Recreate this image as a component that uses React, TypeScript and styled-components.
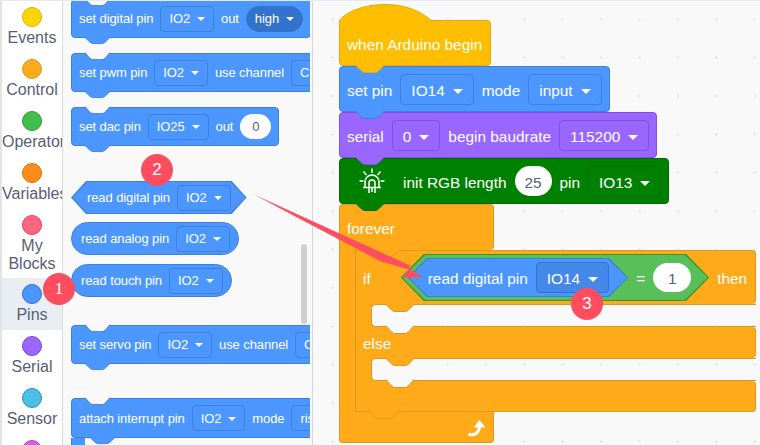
import React from 'react'
import styled, { createGlobalStyle, css } from 'styled-components'

const colors = {
  blue: '#4c97ff',
  blueLine: '#3f80da',
  blueDark: '#3373cc',
  blueField: '#4489ea',
  orange: '#ffab19',
  orangeLine: '#d9982a',
  yellow: '#ffbf00',
  yellowLine: '#e0ac12',
  purple: '#9966ff',
  purpleLine: '#7e52d6',
  green: '#008000',
  greenLine: '#006b00',
  lime: '#59c059',
  limeLine: '#389438',
  paper: '#f9f9f9',
  ink: '#575e75',
  badge: '#ff4d60',
}

const categories = [
  { name: 'Events', color: '#ffd500', line: '#d6b300' },
  { name: 'Control', color: '#ffab19', line: '#d9982a' },
  { name: 'Operators', color: '#40bf4a', line: '#389438' },
  { name: 'Variables', color: '#ff8c1a', line: '#db6e00' },
  { name: 'My Blocks', color: '#ff6680', line: '#ff3355' },
  { name: 'Pins', color: '#4c97ff', line: '#3373cc', active: true },
  { name: 'Serial', color: '#9966ff', line: '#774dcb' },
  { name: 'Sensor', color: '#4cbfe6', line: '#2e8eb8' },
  { name: 'Actuator', color: '#cf63cf', line: '#bd42bd' },
]

const GlobalStyle = createGlobalStyle`
  html, body { margin: 0; padding: 0; background: #fff; }
  body { font-family: "Liberation Sans", Arial, sans-serif; }
`

const dots = css`
  background-color: ${colors.paper};
  background-image: radial-gradient(circle at center, #e6e6e6 0, #e6e6e6 1px, transparent 1.4px);
  background-size: 38.4px 38.4px;
  background-position: 6px 0;
  background-attachment: fixed;
`

const Page = styled.div`
  position: relative;
  display: flex;
  width: 760px;
  height: 445px;
  overflow: hidden;
  box-sizing: border-box;
  border-top: 1px solid #e3eaf3;
  background: #fff;
`

const Sidebar = styled.nav`
  flex: none;
  width: 61px;
  margin-left: 2px;
  box-shadow: -2px 0 0 #e4e4e4;
  border-right: 1px solid #dcdcdc;
  overflow: hidden;
  box-sizing: border-box;
`

const CategoryItem = styled.div<{ $active?: boolean }>`
  display: flex;
  flex-direction: column;
  align-items: center;
  box-sizing: border-box;
  min-height: 52px;
  padding: 6px 0 5px;
  background: ${(p) => (p.$active ? '#e9eef2' : 'transparent')};
`

const CategoryDot = styled.span<{ $color: string; $line: string }>`
  flex: none;
  box-sizing: border-box;
  width: 20px;
  height: 20px;
  border-radius: 50%;
  background: ${(p) => p.$color};
  border: 1px solid ${(p) => p.$line};
`

const CategoryName = styled.span`
  display: block;
  width: 60px;
  margin-top: 2px;
  text-align: center;
  font-size: 16px;
  line-height: 18px;
  color: ${colors.ink};
  white-space: pre;
`

const Palette = styled.section`
  position: relative;
  flex: none;
  width: 247px;
  box-sizing: border-box;
  padding-left: 8px;
  overflow: hidden;
  background: ${colors.paper};
  display: flex;
  flex-direction: column;
  align-items: flex-start;
  --fs: 13px;
  --ls: -0.1px;
  --nudge: 0px;
  --field-h: 26px;
  --field-pad: 8px;
  --field-gap: 7px;
  --row-gap: 7px;
  --pad: 7px;
  --caret: 4px;
  --tab-w: 25px;
  --tab-h: 7px;
  --tab-left: 13px;
`

const Gutter = styled.div`
  flex: none;
  width: 2px;
  background: ${colors.paper};
  border-right: 1px solid #d6d6d6;
`

const Workspace = styled.main`
  ${dots};
  flex: 1;
  min-width: 0;
  box-sizing: border-box;
  padding: 19px 0 0 26px;
  display: flex;
  flex-direction: column;
  align-items: flex-start;
  --fs: 15.4px;
  --ls: 0;
  --nudge: 3px;
  --field-h: 31px;
  --field-pad: 10px;
  --field-gap: 8px;
  --row-gap: 8px;
  --pad: 7px;
  --caret: 5.5px;
  --tab-w: 28px;
  --tab-h: 8px;
  --tab-left: 16px;
`

const Block = styled.div<{ $fill: string; $line: string; $h?: number; $mt?: number; $w?: number }>`
  position: relative;
  flex: none;
  display: flex;
  align-items: center;
  gap: var(--row-gap);
  box-sizing: border-box;
  height: ${(p) => p.$h ?? 46}px;
  width: ${(p) => (p.$w ? `${p.$w}px` : 'max-content')};
  margin-top: ${(p) => p.$mt ?? 0}px;
  padding: 0 var(--pad);
  background: ${(p) => p.$fill};
  border: 1px solid ${(p) => p.$line};
  border-radius: 4px;
  color: #fff;
  font-size: var(--fs);
  letter-spacing: var(--ls);
  white-space: nowrap;
`

const HatBlock = styled(Block)`
  border-top-left-radius: 0;
`

const HatShape = styled.svg`
  position: absolute;
  left: -1px;
  top: -17px;
  overflow: visible;
`

const Pill = styled.div<{ $mt?: number }>`
  display: flex;
  align-items: center;
  flex: none;
  gap: var(--row-gap);
  box-sizing: border-box;
  height: 33px;
  margin-top: ${(p) => p.$mt ?? 0}px;
  padding: 0 8px 0 9px;
  border: 1px solid ${colors.blueLine};
  border-radius: 17px;
  background: ${colors.blue};
  color: #fff;
  font-size: var(--fs);
  letter-spacing: var(--ls);
  white-space: nowrap;
`

const Hex = styled.div<{
  $fill: string
  $line: string
  $slope: number
  $h: number
  $mt?: number
  $ml?: number
  $left: number
  $right: number
}>`
  --cut: polygon(
    ${(p) => p.$slope}px 0,
    calc(100% - ${(p) => p.$slope}px) 0,
    100% 50%,
    calc(100% - ${(p) => p.$slope}px) 100%,
    ${(p) => p.$slope}px 100%,
    0 50%
  );
  position: relative;
  flex: none;
  display: flex;
  align-items: center;
  gap: var(--row-gap);
  box-sizing: border-box;
  height: ${(p) => p.$h}px;
  margin-top: ${(p) => p.$mt ?? 0}px;
  margin-left: ${(p) => p.$ml ?? 0}px;
  padding: 0 ${(p) => p.$right}px 0 ${(p) => p.$left}px;
  background: ${(p) => p.$line};
  clip-path: var(--cut);
  color: #fff;
  font-size: var(--fs);
  letter-spacing: var(--ls);
  white-space: nowrap;
  &::before {
    content: '';
    position: absolute;
    inset: 1px 1.4px;
    background: ${(p) => p.$fill};
    clip-path: var(--cut);
  }
  & > * { position: relative; }
`

const Label = styled.span`
  flex: none;
  padding-top: var(--nudge);
`

const Field = styled.span<{ $line: string; $fill?: string; $round?: boolean }>`
  flex: none;
  display: inline-flex;
  align-items: center;
  gap: var(--field-gap);
  box-sizing: border-box;
  height: var(--field-h);
  padding: var(--nudge) var(--field-pad) 0;
  border: 1px solid ${(p) => p.$line};
  border-radius: ${(p) => (p.$round ? '14px' : '4px')};
  background: ${(p) => p.$fill ?? 'transparent'};
  color: #fff;
`

const Caret = styled.i`
  flex: none;
  width: 0;
  height: 0;
  margin-top: 1px;
  border-left: var(--caret) solid transparent;
  border-right: var(--caret) solid transparent;
  border-top: var(--caret) solid #fff;
`

const NumberOval = styled.span<{ $w: number; $h: number }>`
  flex: none;
  display: inline-flex;
  align-items: center;
  justify-content: center;
  box-sizing: border-box;
  width: ${(p) => p.$w}px;
  height: ${(p) => p.$h}px;
  padding-top: var(--nudge);
  border-radius: ${(p) => p.$h / 2}px;
  background: #fff;
  color: ${colors.ink};
`

const TabShape = styled.svg<{ $left?: number; $dent?: boolean }>`
  position: absolute;
  left: ${(p) => (p.$left !== undefined ? `${p.$left}px` : 'var(--tab-left)')};
  width: var(--tab-w);
  height: var(--tab-h);
  ${(p) => (p.$dent ? 'top: -1px;' : 'bottom: calc(var(--tab-h) * -1);')}
  z-index: ${(p) => (p.$dent ? 1 : 3)};
  overflow: visible;
`

// hanging tab under a block, drawn in the block's own colour
const Tab = ({ fill, line, left }: { fill: string; line: string; left?: number }) => (
  <TabShape $left={left} viewBox="0 0 28 8" preserveAspectRatio="none">
    <path d="M0 0.5 L5 5.5 Q7 7.5 9 7.5 L19 7.5 Q21 7.5 23 5.5 L28 0.5" fill={fill} stroke={line} />
    <path d="M1 -1 L27 -1 L27 1 L1 1 Z" fill={fill} />
  </TabShape>
)

// dent cut into the top of a block, drawn in the background colour
const Dent = ({ line, left }: { line: string; left?: number }) => (
  <TabShape $left={left} $dent viewBox="0 0 28 8" preserveAspectRatio="none">
    <path d="M0 -0.5 L5 5.5 Q7 7.5 9 7.5 L19 7.5 Q21 7.5 23 5.5 L28 -0.5 Z" fill={colors.paper} />
    <path d="M0 -0.5 L5 5.5 Q7 7.5 9 7.5 L19 7.5 Q21 7.5 23 5.5 L28 -0.5" fill="none" stroke={line} />
  </TabShape>
)

const PaletteScrollbar = styled.div`
  position: absolute;
  left: 238px;
  top: 243px;
  width: 6px;
  height: 80px;
  border-radius: 3px;
  background: #cfcfcf;
`

const ForeverBody = styled.div`
  display: flex;
  align-items: stretch;
`

const ForeverArm = styled.div`
  flex: none;
  width: 16px;
  box-sizing: border-box;
  background: ${colors.orange};
  border-left: 1px solid ${colors.orangeLine};
`

const IfColumn = styled.div`
  display: flex;
  flex-direction: column;
  width: 401px;
`

const Bar = styled.div<{ $h: number; $top?: boolean; $bottom?: boolean }>`
  position: relative;
  display: flex;
  align-items: center;
  gap: var(--row-gap);
  box-sizing: border-box;
  height: ${(p) => p.$h}px;
  padding-left: 7px;
  background: ${colors.orange};
  border: 1px solid ${colors.orangeLine};
  border-top-width: ${(p) => (p.$top ? 1 : 0)}px;
  border-bottom-width: ${(p) => (p.$bottom ? 1 : 0)}px;
  border-radius: 0 4px 4px 0;
  color: #fff;
  font-size: var(--fs);
`

const SlotRow = styled.div<{ $h: number }>`
  display: flex;
  height: ${(p) => p.$h}px;
  padding-left: 15px;
  border-left: 1px solid ${colors.orangeLine};
  background: linear-gradient(${colors.orange}, ${colors.orange}) left / 24px 100% no-repeat;
`

const Slot = styled.div`
  ${dots};
  flex: 1;
  box-sizing: border-box;
  border: 1px solid ${colors.orangeLine};
  border-right: 0;
  border-radius: 5px 0 0 5px;
`

const ForeverHead = styled(Block)`
  border-bottom-color: ${colors.orange};
  border-radius: 4px 4px 4px 0;
`

const ForeverFoot = styled(Block)`
  justify-content: flex-end;
  padding-right: 7px;
  border-top-color: ${colors.orange};
  border-top-left-radius: 0;
  border-top-right-radius: 0;
`

const AttachArm = styled.div`
  width: 14px;
  height: 16px;
  flex: none;
  background: ${colors.blue};
  border-left: 1px solid ${colors.blueLine};
  box-sizing: border-box;
`

const LampSlot = styled.span`
  flex: none;
  display: flex;
  margin: 0 10px 0 12px;
`

const Overlay = styled.svg`
  position: absolute;
  left: 0;
  top: -1px;
  width: 760px;
  height: 445px;
  pointer-events: none;
  z-index: 8;
`

const Badge = styled.div<{ $x: number; $y: number; $serif?: boolean }>`
  position: absolute;
  left: ${(p) => p.$x}px;
  top: ${(p) => p.$y}px;
  z-index: 9;
  width: 32px;
  height: 32px;
  border-radius: 50%;
  display: flex;
  align-items: center;
  justify-content: center;
  background: ${colors.badge};
  color: #fff;
  font-size: 17px;
  font-family: ${(p) => (p.$serif ? '"Liberation Serif", serif' : '"Liberation Sans", sans-serif')};
`

const LampIcon = () => (
  <svg width="26" height="26" viewBox="0 0 26 26" fill="none" stroke="#fff" strokeWidth="1.5">
    <path d="M13 0.5V5M4.5 3.5L7.5 7M21.5 3.5L18.5 7M0.5 13H4.5M21.5 13H25.5" />
    <path d="M6 19V14a7 7 0 0 1 14 0v5" />
    <path d="M4 19.5H22M10 19V15a3 3 0 0 1 6 0v4M10 20v5M16 20v5M13 20v4" />
  </svg>
)

const LoopIcon = () => (
  <svg width="18" height="18" viewBox="0 0 18 18">
    <path d="M1.5 15.5C6 16.5 11 14.5 11.5 7.5" fill="none" stroke="#fff" strokeWidth="3.2" strokeLinecap="round" />
    <path d="M6.5 8L11.5 1.5L16.5 8Z" fill="#fff" stroke="#fff" strokeLinejoin="round" />
  </svg>
)

const Drop = ({ value, line, fill }: { value: string; line: string; fill?: string }) => (
  <Field $line={line} $fill={fill}>
    {value}
    <Caret />
  </Field>
)

const App = () => {
  const { blue, blueLine, orange, orangeLine } = colors
  return (
    <Page>
      <GlobalStyle />
      <Sidebar>
        {categories.map((c) => (
          <CategoryItem key={c.name} $active={c.active}>
            <CategoryDot $color={c.color} $line={c.line} />
            <CategoryName>{c.name === 'My Blocks' ? 'My\nBlocks' : c.name}</CategoryName>
          </CategoryItem>
        ))}
      </Sidebar>

      <Palette>
        <Block $fill={blue} $line={blueLine} $h={39} $mt={-2}>
          <Dent line={blueLine} />
          <Label>set digital pin</Label>
          <Drop value="IO2" line={blueLine} />
          <Label>out</Label>
          <Field $line={colors.blueDark} $fill={colors.blueDark} $round>
            high
            <Caret />
          </Field>
          <Tab fill={blue} line={blueLine} />
        </Block>
        <Block $fill={blue} $line={blueLine} $h={39} $mt={15}>
          <Dent line={blueLine} />
          <Label>set pwm pin</Label>
          <Drop value="IO2" line={blueLine} />
          <Label>use channel</Label>
          <Drop value="CH0" line={blueLine} />
          <Tab fill={blue} line={blueLine} />
        </Block>
        <Block $fill={blue} $line={blueLine} $h={39} $mt={15}>
          <Dent line={blueLine} />
          <Label>set dac pin</Label>
          <Drop value="IO25" line={blueLine} />
          <Label>out</Label>
          <NumberOval $w={31} $h={25}>0</NumberOval>
          <Tab fill={blue} line={blueLine} />
        </Block>
        <Hex $fill={blue} $line={blueLine} $slope={15} $h={33} $mt={35} $left={16} $right={16}>
          <Label>read digital pin</Label>
          <Drop value="IO2" line={blueLine} />
        </Hex>
        <Pill $mt={8}>
          <Label>read analog pin</Label>
          <Drop value="IO2" line={blueLine} />
        </Pill>
        <Pill $mt={9}>
          <Label>read touch pin</Label>
          <Drop value="IO2" line={blueLine} />
        </Pill>
        <Block $fill={blue} $line={blueLine} $h={39} $mt={28}>
          <Dent line={blueLine} />
          <Label>set servo pin</Label>
          <Drop value="IO2" line={blueLine} />
          <Label>use channel</Label>
          <Drop value="CH0" line={blueLine} />
          <Tab fill={blue} line={blueLine} />
        </Block>
        <Block $fill={blue} $line={blueLine} $h={40} $mt={34}>
          <Dent line={blueLine} />
          <Label>attach interrupt pin</Label>
          <Drop value="IO2" line={blueLine} />
          <Label>mode</Label>
          <Drop value="rising" line={blueLine} />
          <Tab fill={blue} line={blueLine} left={18} />
        </Block>
        <AttachArm />
        <PaletteScrollbar />
      </Palette>
      <Gutter />

      <Workspace>
        <HatBlock $fill={colors.yellow} $line={colors.yellowLine} $w={152}>
          <HatShape width="94" height="18" viewBox="0 0 94 18">
            <path d="M0.5 18V16.5C7 8 24 0.5 47 0.5C66 0.5 82 7 93.5 17.5" fill={colors.yellow} stroke={colors.yellowLine} />
            <path d="M1 16H90V19H1Z" fill={colors.yellow} />
          </HatShape>
          <Label>when Arduino begin</Label>
          <Tab fill={colors.yellow} line={colors.yellowLine} />
        </HatBlock>
        <Block $fill={blue} $line={blueLine}>
          <Label>set pin</Label>
          <Drop value="IO14" line={blueLine} />
          <Label>mode</Label>
          <Drop value="input" line={blueLine} />
          <Tab fill={blue} line={blueLine} />
        </Block>
        <Block $fill={colors.purple} $line={colors.purpleLine}>
          <Label>serial</Label>
          <Drop value="0" line={colors.purpleLine} />
          <Label>begin baudrate</Label>
          <Drop value="115200" line={colors.purpleLine} />
          <Tab fill={colors.purple} line={colors.purpleLine} />
        </Block>
        <Block $fill={colors.green} $line={colors.greenLine}>
          <LampSlot>
            <LampIcon />
          </LampSlot>
          <Label>init RGB length</Label>
          <NumberOval $w={37} $h={30}>25</NumberOval>
          <Label>pin</Label>
          <Drop value="IO13" line={colors.greenLine} />
          <Tab fill={colors.green} line={colors.greenLine} />
        </Block>
        <ForeverHead $fill={orange} $line={orangeLine} $w={155}>
          <Label>forever</Label>
          <Tab fill={orange} line={orangeLine} left={32} />
        </ForeverHead>
        <ForeverBody>
          <ForeverArm />
          <IfColumn>
            <Bar $h={54} $top>
              <Label>if</Label>
              <Hex $fill={colors.lime} $line={colors.limeLine} $slope={23} $h={47} $ml={22} $left={7} $right={18}>
                <Hex $fill={blue} $line={blueLine} $slope={19} $h={39} $left={20} $right={19}>
                  <Label>read digital pin</Label>
                  <Drop value="IO14" line={colors.blueDark} fill={colors.blueField} />
                </Hex>
                <Label>=</Label>
                <NumberOval $w={38} $h={29}>1</NumberOval>
              </Hex>
              <Label>then</Label>
              <Tab fill={orange} line={orangeLine} left={30} />
            </Bar>
            <SlotRow $h={23}>
              <Slot />
            </SlotRow>
            <Bar $h={31}>
              <Dent line={orangeLine} left={30} />
              <Label>else</Label>
              <Tab fill={orange} line={orangeLine} left={30} />
            </Bar>
            <SlotRow $h={23}>
              <Slot />
            </SlotRow>
            <Bar $h={31} $bottom>
              <Dent line={orangeLine} left={30} />
              <Tab fill={orange} line={orangeLine} left={14} />
            </Bar>
          </IfColumn>
        </ForeverBody>
        <ForeverFoot $fill={orange} $line={orangeLine} $h={31} $w={155}>
          <LoopIcon />
        </ForeverFoot>
      </Workspace>

      <Overlay viewBox="0 0 760 445">
        <polygon points="253,194 411,266 412,263 403,278 422,277 414,271 380,261 300,219" fill={colors.badge} />
      </Overlay>
      <Badge $x={43} $y={272} $serif>1</Badge>
      <Badge $x={141} $y={153}>2</Badge>
      <Badge $x={571} $y={287}>3</Badge>
    </Page>
  )
}

export default App
